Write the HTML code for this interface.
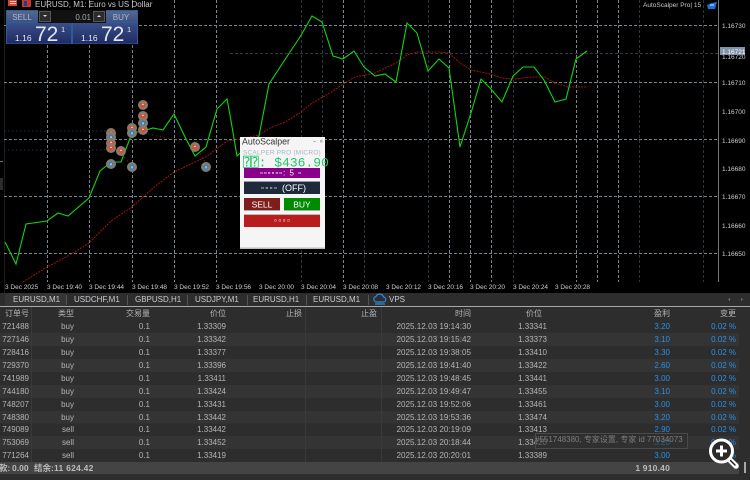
<!DOCTYPE html>
<html><head><meta charset="utf-8"><style>
html,body{margin:0;padding:0;background:#000;width:750px;height:480px;overflow:hidden}
svg{display:block;font-family:"Liberation Sans","Noto Sans CJK SC",sans-serif}
</style></head><body>
<svg width="750" height="480" viewBox="0 0 750 480" xmlns="http://www.w3.org/2000/svg">
<defs>
<g id="r"><circle r="5" fill="#857b6f"/><path d="M-2.800-1.800H2.800V0.400L0 3.200-2.800 0.400Z" fill="#e4482c"/><path d="M-1-1.200H1V0H-1Z" fill="#f6c0a8"/></g>
<g id="b"><circle r="5" fill="#857b6f"/><path d="M0-2.800 3.200 0.200H1.400V2.600H-1.400V0.200H-3.200Z" fill="#1f7fd2"/><path d="M-0.600-0.800H0.600V1.400H-0.600Z" fill="#d5e8f5"/></g>
<linearGradient id="q" x1="0" y1="0" x2="0" y2="1"><stop offset="0" stop-color="#3a4e88"/><stop offset="1" stop-color="#1f2c62"/></linearGradient>
<linearGradient id="s" x1="0" y1="0" x2="0" y2="1"><stop offset="0" stop-color="#54688f"/><stop offset="1" stop-color="#3e5282"/></linearGradient>
</defs>
<rect width="750" height="293" fill="#000"/>
<rect x="0" y="161" width="3" height="1" fill="#777"/><rect x="0" y="178" width="3" height="12" fill="#2c2c2c"/>
<path d="M4.500 0V293" stroke="#1c1c1c"/>
<!-- grid -->
<g stroke="#76858f" stroke-width="1" stroke-dasharray="3 2" fill="none">
<path d="M4 25.500H718M4 82.500H718M4 139.500H718M4 196.500H718M4 253.500H718"/>
<path d="M47.500 0V282M89.500 0V282M132.500 0V282M174.500 0V282M216.500 0V282M343.500 0V282M449.500 0V282M470.500 0V282M491.500 0V282M576.500 0V282M597.500 0V282M618.500 0V282"/>
<g opacity=".4"><path d="M230 53.500H718"/><path d="M301.500 0V282M322.500 0V137M364.500 0V282M428.500 0V282M513.500 0V282M639.500 0V282M703.500 0V282"/></g>
</g>
<path d="M718.500 0V282" stroke="#777"/>
<!-- blue/red order traces -->
<g fill="none" stroke-dasharray="1.500 2.500">
<path d="M4 131H106M4 150H106" stroke="#123654"/>
<path d="M148 134L180 141M122 154L130 164M198 150L205 162" stroke="#6c1414"/>
</g>
<!-- MA -->
<polyline fill="none" stroke="#a01212" stroke-width="1" stroke-dasharray="2 1" points="23,282 47,267 68,256 89,243 111,221 132,207 153,188 174,172 195,162 206,157 227,141 240,139 250,137 259,135 270,128 285,122 300,113 312,103 330,93 343,84 355,77 375,73 385,68 396,63 407,55 417,52 440,52 449,53 460,63 471,70 490,74 502,78 513,79 533,77 545,77 555,83 568,87 587,87"/>
<!-- price -->
<polyline fill="none" stroke="#0fd60f" stroke-width="1.100" points="5,242 16,264 26,224 47,221 58,213 68,216 89,198 100,171 111,162 121,162 132,133 143,131 153,128 163,130 174,114 185,137 195,156 206,147 217,109 227,99 230,115 237,156 259,136 269,84 290,52 300,37 312,16 322,22 333,56 343,59 354,51 364,67 375,76 385,74 396,82 407,23 417,33 428,71 439,59 449,68 460,147 471,113 481,79 490,88 502,102 513,76 523,67 534,67 544,80 555,102 566,99 576,59 587,51"/>
<!-- markers -->
<use href="#r" x="143" y="105"/><use href="#r" x="143" y="116"/><use href="#b" x="143" y="123"/><use href="#r" x="143" y="130"/>
<use href="#r" x="132" y="128"/><use href="#b" x="132" y="133"/>
<use href="#r" x="111" y="133"/><use href="#b" x="111" y="137"/><use href="#r" x="111" y="143"/><use href="#r" x="111" y="148"/>
<use href="#r" x="121" y="151"/><use href="#b" x="111" y="164"/><use href="#b" x="132" y="167"/><use href="#r" x="195" y="147"/><use href="#b" x="206" y="167"/>
<!-- top left icons/title -->
<rect x="8" y="0" width="9" height="6" fill="#d8433a"/><path d="M10 1.500H16M10 3.500H16" stroke="#f3c7c0"/>
<rect x="22" y="0" width="9" height="7" fill="#c9352e"/><rect x="24" y="1" width="3" height="5" fill="#1f3f8a"/>
<text x="35" y="7" font-size="8" fill="#c8c8c8">EURUSD, M1:  Euro vs US Dollar</text>
<!-- one click -->
<rect x="6" y="10" width="132" height="34" fill="#2d5c9b"/>
<rect x="7" y="11" width="31" height="11" fill="url(#s)"/><rect x="106" y="11" width="31" height="11" fill="url(#s)"/>
<rect x="38" y="10" width="68" height="13" fill="#111"/>
<rect x="39.500" y="11.500" width="11" height="10" fill="#2c2c2c" stroke="#555"/><rect x="93.500" y="11.500" width="11" height="10" fill="#2c2c2c" stroke="#555"/>
<path d="M43 15H47L45 17Z" fill="#ddd"/><path d="M97 17H101L99 15Z" fill="#ddd"/>
<text x="22" y="20" font-size="8" fill="#a9b7d0" text-anchor="middle">SELL</text>
<text x="121" y="20" font-size="8" fill="#a9b7d0" text-anchor="middle">BUY</text>
<text x="91" y="20" font-size="8" fill="#a8a8a8" text-anchor="end">0.01</text>
<rect x="7" y="23" width="64" height="20.500" fill="url(#q)"/><rect x="73" y="23" width="64" height="20.500" fill="url(#q)"/>
<g fill="#e4e8f2"><text x="15" y="41" font-size="8.500">1.16</text><text x="35" y="41" font-size="21">72</text><text x="61" y="32" font-size="7.500">1</text>
<text x="81" y="41" font-size="8.500">1.16</text><text x="101" y="41" font-size="21">72</text><text x="127" y="32" font-size="7.500">1</text></g>
<!-- top right -->
<text x="643" y="7" font-size="6.500" fill="#c8c8c8">AutoScalper Pro| 15</text>
<path d="M707 5L712 3 717 2 716 5 715 9H708Z" fill="#1d72d8"/><path d="M710 5H714" stroke="#cfe3fa"/>
<!-- axis -->
<g font-size="6.500" fill="#cfcfcf">
<text x="722" y="28">1.16730</text><text x="722" y="59">1.16720</text><text x="722" y="85">1.16710</text><text x="722" y="114">1.16700</text><text x="722" y="143">1.16690</text><text x="722" y="171">1.16680</text><text x="722" y="199">1.16670</text><text x="722" y="228">1.16660</text><text x="722" y="256">1.16650</text>
<text x="5" y="289">3 Dec 2025</text><text x="47" y="289">3 Dec 19:40</text><text x="89" y="289">3 Dec 19:44</text><text x="132" y="289">3 Dec 19:48</text><text x="174" y="289">3 Dec 19:52</text><text x="216" y="289">3 Dec 19:56</text><text x="259" y="289">3 Dec 20:00</text><text x="301" y="289">3 Dec 20:04</text><text x="343" y="289">3 Dec 20:08</text><text x="386" y="289">3 Dec 20:12</text><text x="428" y="289">3 Dec 20:16</text><text x="470" y="289">3 Dec 20:20</text><text x="513" y="289">3 Dec 20:24</text><text x="555" y="289">3 Dec 20:28</text>
</g>
<rect x="720" y="47" width="25" height="8" fill="#8093a8"/><text x="722" y="54" font-size="6.500" fill="#fff">1.16721</text>
<!-- dialog -->
<rect x="240" y="137" width="85" height="112" fill="#f5f5f5"/><rect x="240" y="247.500" width="85" height="1.500" fill="#bdbdbd"/>
<text x="242" y="144.500" font-size="8.800" fill="#333">AutoScalper</text>
<rect x="313" y="141" width="3" height="1" fill="#bbb"/><rect x="320" y="140" width="2.500" height="2.500" fill="#bbb"/>
<text x="243" y="154.500" font-size="6.500" fill="#a9b3c6" letter-spacing=".2">SCALPER PRO (MICRO)</text>
<text x="243" y="166.500" font-size="13" fill="#1fc768" style="font-family:'Liberation Mono','DejaVu Sans Mono',monospace">⍰⍰: $436.90</text>
<rect x="244" y="168" width="76" height="10" fill="#8b008b"/>
<text x="260" y="175.500" font-size="8" fill="#fff" letter-spacing="1">▫▫▫▫▫▫: 5 ▫</text>
<rect x="244" y="181" width="76" height="13" fill="#1e293b"/><rect x="244" y="181" width="76" height="1" fill="#99a"/>
<text x="261" y="190.500" font-size="8" fill="#e8e8e8" letter-spacing="1.500">▫▫▫▫</text>
<text x="282" y="191" font-size="9" fill="#fff">(OFF)</text>
<rect x="244" y="198" width="36" height="13" fill="#7f1d1d"/><rect x="244" y="210" width="36" height="1" fill="#aaa"/>
<text x="262" y="207.500" font-size="8.500" fill="#fff" text-anchor="middle">SELL</text>
<rect x="284" y="198" width="36" height="13" fill="#008a00"/><rect x="284" y="210" width="36" height="1" fill="#aaa"/>
<text x="302" y="207.500" font-size="8.500" fill="#fff" text-anchor="middle">BUY</text>
<rect x="244" y="214" width="76" height="13" fill="#b91c1c"/><rect x="244" y="214" width="76" height="1" fill="#bbb"/>
<text x="274" y="223" font-size="8" fill="#fff" letter-spacing="1.500">▫▫▫▫</text>
<!-- bottom -->
<rect x="0" y="293" width="750" height="187" fill="#2d2d2d"/>
<rect x="5" y="293" width="61" height="13" fill="#353535"/>
<path d="M66.500 295V305M127.500 295V305M187.500 295V305M247.500 295V305M306.500 295V305M368.500 295V305" stroke="#555"/>
<rect x="0" y="306" width="750" height="1" fill="#a8a8a8"/>
<g font-size="8" fill="#c8ccd0"><text x="13" y="302">EURUSD,M1</text><text x="74" y="302">USDCHF,M1</text><text x="135" y="302">GBPUSD,H1</text><text x="195" y="302">USDJPY,M1</text><text x="253" y="302">EURUSD,H1</text><text x="313" y="302">EURUSD,M1</text><text x="389" y="302">VPS</text></g>
<path d="M377 302H383a2.500 2.500 0 0 0 .5-5 4 4 0 0 0-7.500-.5 2.800 2.800 0 0 0 1 5.500ZM375 304H385" fill="none" stroke="#2c8be0" stroke-width="1.200"/>
<path d="M730 297.500L728 299.500 730 301.500Z" fill="#666"/><path d="M741 297.500L743 299.500 741 301.500Z" fill="#666"/>
<!-- rows -->
<rect x="0" y="333" width="739" height="13" fill="#343434"/><rect x="0" y="359" width="739" height="13" fill="#343434"/><rect x="0" y="385" width="739" height="13" fill="#343434"/><rect x="0" y="411" width="739" height="12.500" fill="#343434"/><rect x="0" y="436" width="739" height="13" fill="#343434"/>
<path d="M31.500 307V462M305.500 307V462M381.500 307V462" stroke="#3a3a3a"/>
<rect x="0" y="462" width="739" height="12" fill="#444"/>
<rect x="744" y="462" width="2" height="11" fill="#a8a8a8"/>
<g font-size="8" fill="#b4b4b4">
<g text-anchor="end"><text x="29" y="316">订单号</text><text x="74" y="316">类型</text><text x="150" y="316">交易量</text><text x="226" y="316">价位</text><text x="302" y="316">止损</text><text x="377" y="316">止盈</text><text x="471" y="316">时间</text><text x="542" y="316">价位</text><text x="670" y="316">盈利</text><text x="736" y="316">变更</text></g>
<g text-anchor="end">
<text x="29" y="329">721488</text><text x="29" y="342">727146</text><text x="29" y="355">728416</text><text x="29" y="368">729370</text><text x="29" y="381">741989</text><text x="29" y="394">744180</text><text x="29" y="407">748207</text><text x="29" y="420">748380</text><text x="29" y="432">749089</text><text x="29" y="445">753069</text><text x="29" y="458">771264</text>
<text x="74" y="329">buy</text><text x="74" y="342">buy</text><text x="74" y="355">buy</text><text x="74" y="368">buy</text><text x="74" y="381">buy</text><text x="74" y="394">buy</text><text x="74" y="407">buy</text><text x="74" y="420">buy</text><text x="74" y="432">sell</text><text x="74" y="445">sell</text><text x="74" y="458">sell</text>
<text x="150" y="329">0.1</text><text x="150" y="342">0.1</text><text x="150" y="355">0.1</text><text x="150" y="368">0.1</text><text x="150" y="381">0.1</text><text x="150" y="394">0.1</text><text x="150" y="407">0.1</text><text x="150" y="420">0.1</text><text x="150" y="432">0.1</text><text x="150" y="445">0.1</text><text x="150" y="458">0.1</text>
<text x="226" y="329">1.33309</text><text x="226" y="342">1.33342</text><text x="226" y="355">1.33377</text><text x="226" y="368">1.33396</text><text x="226" y="381">1.33411</text><text x="226" y="394">1.33424</text><text x="226" y="407">1.33431</text><text x="226" y="420">1.33442</text><text x="226" y="432">1.33442</text><text x="226" y="445">1.33452</text><text x="226" y="458">1.33419</text>
<g font-size="8.150"><text x="471" y="329">2025.12.03 19:14:30</text><text x="471" y="342">2025.12.03 19:15:42</text><text x="471" y="355">2025.12.03 19:38:05</text><text x="471" y="368">2025.12.03 19:41:40</text><text x="471" y="381">2025.12.03 19:48:45</text><text x="471" y="394">2025.12.03 19:49:47</text><text x="471" y="407">2025.12.03 19:52:06</text><text x="471" y="420">2025.12.03 19:53:36</text><text x="471" y="432">2025.12.03 20:19:09</text><text x="471" y="445">2025.12.03 20:18:44</text><text x="471" y="458">2025.12.03 20:20:01</text></g>
<text x="547" y="329">1.33341</text><text x="547" y="342">1.33373</text><text x="547" y="355">1.33410</text><text x="547" y="368">1.33422</text><text x="547" y="381">1.33441</text><text x="547" y="394">1.33455</text><text x="547" y="407">1.33461</text><text x="547" y="420">1.33474</text><text x="547" y="432">1.33413</text><text x="547" y="445">1.33420</text><text x="547" y="458">1.33389</text>
</g>
<g text-anchor="end" fill="#2a8fe8">
<text x="670" y="329">3.20</text><text x="670" y="342">3.10</text><text x="670" y="355">3.30</text><text x="670" y="368">2.60</text><text x="670" y="381">3.00</text><text x="670" y="394">3.10</text><text x="670" y="407">3.00</text><text x="670" y="420">3.20</text><text x="670" y="432">2.90</text><text x="670" y="445">3.20</text><text x="670" y="458">3.00</text>
<text x="736" y="329">0.02 %</text><text x="736" y="342">0.02 %</text><text x="736" y="355">0.02 %</text><text x="736" y="368">0.02 %</text><text x="736" y="381">0.02 %</text><text x="736" y="394">0.02 %</text><text x="736" y="407">0.02 %</text><text x="736" y="420">0.02 %</text><text x="736" y="432">0.02 %</text><text x="736" y="445">0.02 %</text><text x="736" y="458">0.02 %</text>
</g>
<g font-weight="bold" fill="#bcbcbc" font-size="8.500"><text x="-1" y="471">款:</text><text x="12" y="471">0.00</text><text x="34" y="471">结余:</text><text x="54" y="471" letter-spacing=".25">11 624.42</text><text x="670" y="471" text-anchor="end" letter-spacing=".2">1 910.40</text></g>
</g>
<!-- watermark -->
<rect x="535.500" y="433.500" width="152" height="15" fill="#2d2d2d" fill-opacity=".55" stroke="#4a4a4a"/>
<text x="535" y="442" font-size="8" fill="#7d7d7d">#551748380, 专家设置, 专家 id 77034073</text>
<!-- magnifier -->
<path d="M729 459L736 466" stroke="#fff" stroke-width="5.500" stroke-linecap="round"/><path d="M730.500 460.500L735 465" stroke="#222" stroke-width="1.500" stroke-linecap="round"/>
<circle cx="721.500" cy="451" r="11" fill="#2a2a2a" stroke="#fff" stroke-width="3"/>
<path d="M716 451H727M721.500 445.500V456.500" stroke="#fff" stroke-width="3"/>
</svg>
</body></html>
